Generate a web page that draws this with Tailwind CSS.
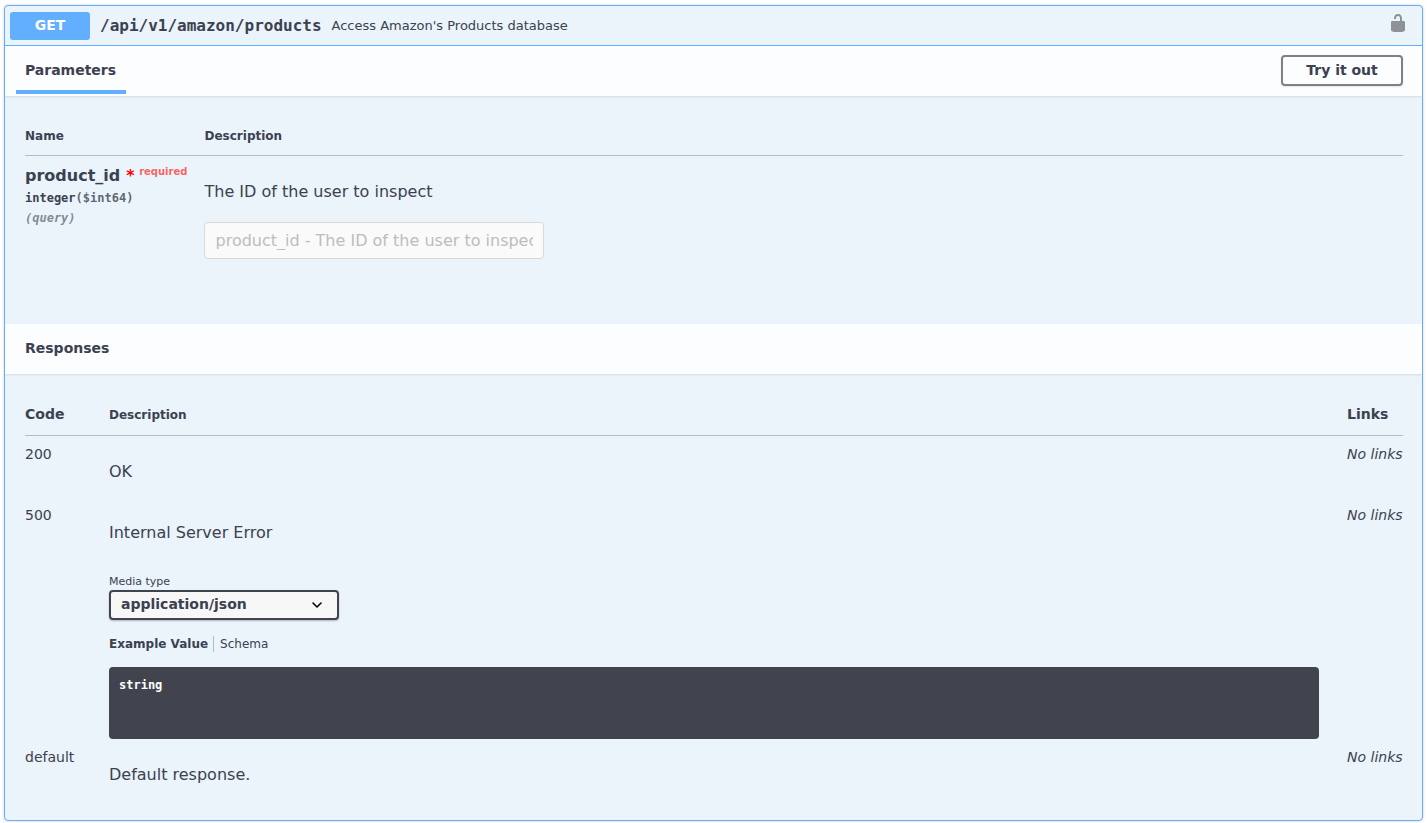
<!DOCTYPE html>
<html>
  <head>
    <title>Amazon Products API</title>
    <script src="https://cdn.jsdelivr.net/npm/@tailwindcss/browser@4"></script>
  </head>
  <body class="bg-white font-['DejaVu_Sans',sans-serif] text-[#3b4151] h-[823px] overflow-hidden">
    <main class="pt-[5px] px-1">
      <div class="h-[816px] border border-[#61affe] rounded bg-[#ebf3fb] shadow-[0_0_3px_rgba(0,0,0,0.19)] overflow-hidden">
        <!-- Summary -->
        <div class="h-10 flex items-center px-[5px] border-b border-[#61affe]">
          <span class="w-20 h-7 shrink-0 flex items-center justify-center pb-[2px] rounded-[3px] bg-[#61affe] text-white text-sm font-bold">GET</span>
          <span class="ml-[10px] font-['DejaVu_Sans_Mono',monospace] text-base font-semibold">/api/v1/amazon/products</span>
          <span class="ml-[10px] text-[13px]">Access Amazon's Products database</span>
          <svg class="ml-auto mr-[9px] mb-[5px]" width="20" height="20" viewBox="0 0 20 20" fill="#8e9196">
            <path d="M15.8 8H14V5.6C14 2.703 12.665 1 10 1 7.334 1 6 2.703 6 5.6V6h2v-.801C8 3.754 8.797 3 10 3c1.203 0 2 .754 2 2.199V8H4c-.553 0-1 .646-1 1.199V17c0 .549.428 1.139.951 1.307l1.197.387C5.672 18.861 6.55 19 7.1 19h5.8c.549 0 1.428-.139 1.951-.307l1.196-.387c.524-.167.953-.757.953-1.306V9.199C17 8.646 16.352 8 15.8 8z"/>
          </svg>
        </div>

        <!-- Parameters header -->
        <div class="h-[50px] flex items-start justify-between pl-[11px] pr-[19px] bg-white/80 shadow-[0_1px_2px_rgba(0,0,0,0.1)]">
          <div class="w-[110px] h-[48px] pt-[3px] pr-[1px] border-b-4 border-[#61affe] flex items-center justify-center text-sm font-bold">Parameters</div>
          <button class="mt-[9px] w-[122px] h-[31px] pb-[2px] border-2 border-[#808080] rounded text-sm font-bold text-[#3b4151] shadow-[0_1px_2px_rgba(0,0,0,0.1)]">Try it out</button>
        </div>

        <!-- Parameters table -->
        <div class="h-[228px] pt-[21px] pl-5 pr-[19px]">
          <div class="flex h-[39px] items-center border-b border-[#3b4151]/30 text-xs font-bold">
            <div class="w-[179.5px]">Name</div>
            <div>Description</div>
          </div>
          <div class="flex">
            <div class="w-[179.5px] shrink-0">
              <div class="mt-[10px] h-5 flex items-start">
                <span class="text-base font-bold leading-5">product_id</span>
                <span class="ml-[6px] text-base font-bold leading-5 text-[#f00]">*</span>
                <span class="ml-[4.5px] -mt-px text-[10px] font-bold leading-[14px] text-[#f93e3e]/80">required</span>
              </div>
              <div class="mt-[4px] font-['DejaVu_Sans_Mono',monospace] text-xs leading-4 font-bold">integer<span class="text-[#3b4151]/80">($int64)</span></div>
              <div class="mt-1 font-['DejaVu_Sans_Mono',monospace] text-xs leading-4 italic font-semibold text-[#3b4151]/60">(query)</div>
            </div>
            <div>
              <p class="mt-[26px] text-[16px] leading-5">The ID of the user to inspect</p>
              <input class="mt-[20px] -ml-[0.5px] block w-[340px] h-[37px] pl-[10.5px] pr-[10px] bg-[#fafafa] border border-[#d9d9d9] rounded text-base placeholder:text-[#bdbdbd] outline-none" placeholder="product_id - The ID of the user to inspect">
            </div>
          </div>
        </div>

        <!-- Responses header -->
        <div class="h-[50px] flex items-center pl-5 pb-[2px] bg-white/80 shadow-[0_1px_2px_rgba(0,0,0,0.1)] text-sm font-bold">Responses</div>

        <!-- Responses table -->
        <div class="pt-[21px] pl-5 pr-[19px]">
          <div class="flex h-[41px] items-center border-b border-[#3b4151]/30 font-bold">
            <div class="w-[84px] pb-[2px] text-sm">Code</div>
            <div class="flex-1 text-xs">Description</div>
            <div class="w-[56px] pb-[2px] text-sm">Links</div>
          </div>

          <div class="flex h-[61px]">
            <div class="w-[84px] pt-[10px] text-sm leading-4">200</div>
            <div class="flex-1 pt-[26px] text-base leading-5">OK</div>
            <div class="w-[56px] pt-[10px] text-sm leading-4 italic">No links</div>
          </div>

          <div class="flex h-[242px]">
            <div class="w-[84px] pt-[10px] text-sm leading-4">500</div>
            <div class="flex-1 pr-[28px]">
              <p class="pt-[26px] text-base leading-5">Internal Server Error</p>
              <p class="mt-[32px] text-[11px] leading-[14px]">Media type</p>
              <div class="mt-[1px] w-[230px] h-[30px] flex items-center justify-between pl-[10px] pr-[15px] bg-[#f7f7f7] border-2 border-[#41444e] rounded shadow-[0_1px_2px_rgba(0,0,0,0.25)] text-sm font-bold">
                <span class="pb-[2px]">application/json</span>
                <svg width="10" height="6" viewBox="0 0 10 6" fill="none" stroke="#000" stroke-width="1.6" stroke-linecap="round" stroke-linejoin="round"><path d="M1 1l4 4 4-4"/></svg>
              </div>
              <div class="mt-[16px] flex items-center text-xs leading-4">
                <span class="font-bold pr-[5px] border-r border-[#3b4151]/30">Example Value</span>
                <span class="pl-[6px]">Schema</span>
              </div>
              <div class="mt-[15px] h-[72px] rounded bg-[#41444e] px-[10px] py-[10px] font-['DejaVu_Sans_Mono',monospace] text-xs leading-4 font-semibold text-white">string</div>
            </div>
            <div class="w-[56px] pt-[10px] text-sm leading-4 italic">No links</div>
          </div>

          <div class="flex">
            <div class="w-[84px] pt-[10px] text-sm leading-4">default</div>
            <div class="flex-1 pt-[26px] text-base leading-5">Default response.</div>
            <div class="w-[56px] pt-[10px] text-sm leading-4 italic">No links</div>
          </div>
        </div>
      </div>
    </main>
  </body>
</html>
